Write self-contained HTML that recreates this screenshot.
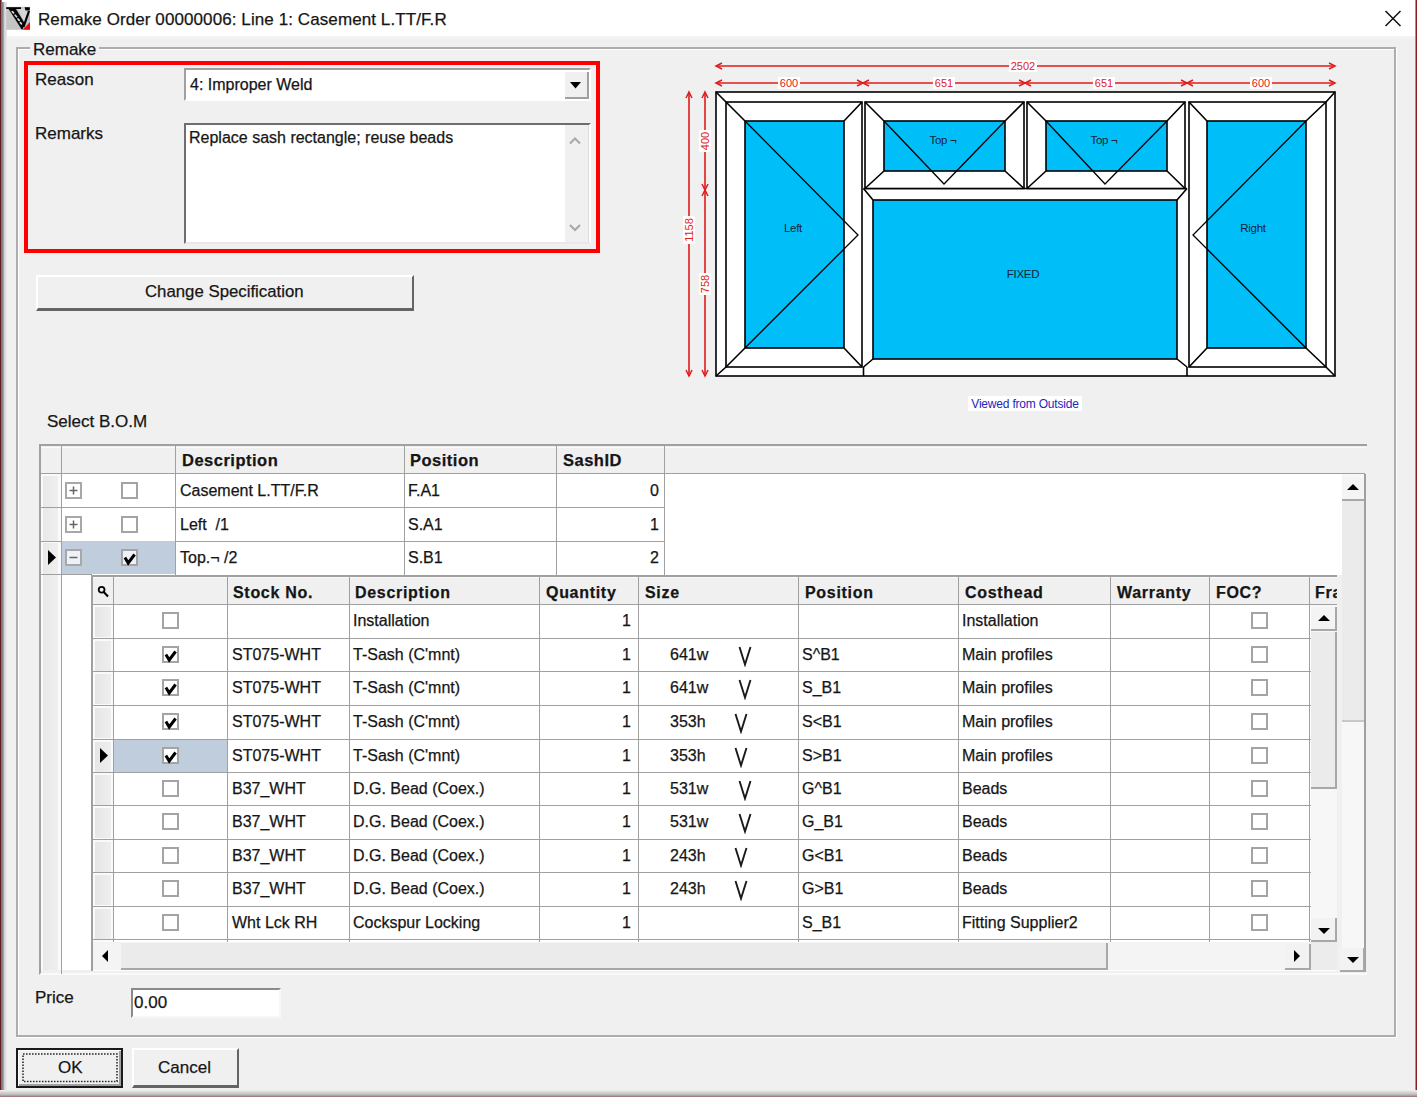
<!DOCTYPE html>
<html><head><meta charset="utf-8">
<style>
*{margin:0;padding:0;box-sizing:border-box}
html,body{width:1417px;height:1097px;overflow:hidden;background:#f0f0f0;font-family:"Liberation Sans",sans-serif;color:#151515}
.a{position:absolute}
.t{position:absolute;white-space:pre;line-height:1;-webkit-text-stroke:0.25px #1a1a1a}
.b{font-weight:bold}
.cb{position:absolute;width:17px;height:17px;border:2px solid #a4a4a4;background:#fff}
</style></head><body>
<div class="a" style="left:0px;top:0px;width:1417px;height:36px;background:#fff"></div>
<div class="a" style="left:0px;top:36px;width:1417px;height:3px;background:linear-gradient(#f6f6f6,#f0f0f0)"></div>
<div class="a" style="left:0px;top:0px;width:1px;height:1097px;background:#601c20"></div>
<div class="a" style="left:1px;top:0px;width:1px;height:1097px;background:#a86468"></div>
<div class="a" style="left:1416px;top:0px;width:1px;height:1097px;background:#8a1c24"></div>
<div class="a" style="left:1415px;top:0px;width:1px;height:1097px;background:#c4848a"></div>
<div class="a" style="left:2px;top:2px;width:5px;height:1090px;background:linear-gradient(90deg,#78787a,#b4b4b8 40%,#d0d4d8 50%,#ececec)"></div>
<svg class="a" style="left:6px;top:6px" width="25" height="25" viewBox="6 6 25 25">
<rect x="6.2" y="6.8" width="23.8" height="23" fill="#c4c4c4"/>
<polygon points="18,8.5 30,8.5 30,12 24.5,22" fill="#d6d6d6"/>
<polygon points="6.2,7.2 21,7.2 21,9 6.2,9" fill="#000"/>
<polygon points="8,8 15.5,8.3 24.5,23 22.8,29.3 21.5,29.2" fill="#050505"/>
<polygon points="24.6,7.2 29.8,7.2 29.8,10.5 25.5,10.5" fill="#000"/>
<path d="M29 11 L23.5 27" stroke="#000" stroke-width="2.2"/>
<path d="M12.3 11.6 L13.6 13 M15.2 15.2 L16.6 16.8 M18 19 L19.2 20.4 M20.4 22.6 L21.4 23.8" stroke="#d8dde4" stroke-width="1.7" stroke-linecap="round"/>
<polygon points="22.8,29.8 30,22 30,29.8" fill="#e01010"/>
</svg>
<div class="t" style="left:38px;top:10.5px;font-size:17px;letter-spacing:0.09px">Remake Order 00000006: Line 1: Casement L.TT/F.R</div>
<svg class="a" style="left:1384px;top:10px" width="18" height="17"><path d="M1.5 1 L16.5 16 M16.5 1 L1.5 16" stroke="#111" stroke-width="1.5"/></svg>
<div class="a" style="left:16px;top:47px;width:1380px;height:990px;border:2px solid #adadad;box-shadow:inset 1px 1px 0 #fff,1px 1px 0 #fff"></div>
<div class="t" style="left:30px;top:41px;font-size:17px;padding:0 3px;background:#f0f0f0">Remake</div>
<div class="a" style="left:24px;top:61px;width:576px;height:192px;border:4px solid #ff0000"></div>
<div class="t" style="left:35px;top:71px;font-size:17px;">Reason</div>
<div class="t" style="left:35px;top:125px;font-size:17px;">Remarks</div>
<div class="a" style="left:184px;top:68px;width:407px;height:33px;background:#fff;border:2px solid #a0a0a0;border-right-color:#fff;border-bottom-color:#fff"></div>
<div class="t" style="left:190px;top:77px;font-size:16px;">4: Improper Weld</div>
<div class="a" style="left:565px;top:72px;width:24px;height:27px;background:#f0f0f0;border-right:2px solid #a0a0a0;border-bottom:2px solid #a0a0a0"></div>
<svg class="a" style="left:569px;top:81px" width="14" height="9"><path d="M1 1 L12 1 L6.5 7.5 Z" fill="#000"/></svg>
<div class="a" style="left:184px;top:123px;width:407px;height:121px;background:#fff;border:2px solid #6e6e6e;border-right-color:#fff;border-bottom-color:#e8e8e8"></div>
<div class="t" style="left:189px;top:130px;font-size:16px;">Replace sash rectangle; reuse beads</div>
<div class="a" style="left:565px;top:125px;width:24px;height:117px;background:#f0f0f0;border-right:1px solid #dcdcdc"></div>
<svg class="a" style="left:567px;top:132px" width="16" height="104"><path d="M3 11.5 L8 6.5 L13 11.5" stroke="#a8a8a8" stroke-width="2" fill="none"/><path d="M3 93 L8 98 L13 93" stroke="#a8a8a8" stroke-width="2" fill="none"/></svg>
<div class="a" style="left:36px;top:275px;width:378px;height:36px;background:#f0f0f0;border-top:2px solid #fff;border-left:2px solid #fff;border-right:2px solid #646464;border-bottom:3px solid #646464"></div>
<div class="t" style="left:145px;top:284px;font-size:16.8px;">Change Specification</div>
<svg class="a" style="left:660px;top:50px" width="700" height="370" viewBox="660 50 700 370"><g fill="none" stroke="#e01c1c" stroke-width="1.6"><path d="M716 66 L1335 66 M716 83 L1335 83"/><path d="M689 92 L689 376 M705 92 L705 376"/></g><g fill="none" stroke="#e01c1c" stroke-width="1.5"><path d="M722 63 L716 66 L722 69"/><path d="M1329 63 L1335 66 L1329 69"/><path d="M722 80 L716 83 L722 86"/><path d="M857 80 L863 83 L857 86"/><path d="M869 80 L863 83 L869 86"/><path d="M1019 80 L1025 83 L1019 86"/><path d="M1031 80 L1025 83 L1031 86"/><path d="M1181 80 L1187 83 L1181 86"/><path d="M1193 80 L1187 83 L1193 86"/><path d="M1329 80 L1335 83 L1329 86"/><path d="M686 98 L689 92 L692 98"/><path d="M686 370 L689 376 L692 370"/><path d="M702 98 L705 92 L708 98"/><path d="M702 184 L705 190 L708 184"/><path d="M702 196 L705 190 L708 196"/><path d="M702 370 L705 376 L708 370"/></g><g font-family="Liberation Sans" font-size="11" fill="#e01c1c" text-anchor="middle"><rect x="1009.0" y="60" width="28" height="12" fill="#fff"/><text x="1023" y="70">2502</text><rect x="778.0" y="77" width="22" height="12" fill="#fff"/><text x="789" y="87">600</text><rect x="933.0" y="77" width="22" height="12" fill="#fff"/><text x="944" y="87">651</text><rect x="1093.0" y="77" width="22" height="12" fill="#fff"/><text x="1104" y="87">651</text><rect x="1250.0" y="77" width="22" height="12" fill="#fff"/><text x="1261" y="87">600</text><g transform="translate(689 230) rotate(-90)"><rect x="-14.0" y="-6" width="28" height="12" fill="#fff"/><text x="0" y="4">1158</text></g><g transform="translate(705 141) rotate(-90)"><rect x="-11.0" y="-6" width="22" height="12" fill="#fff"/><text x="0" y="4">400</text></g><g transform="translate(705 284) rotate(-90)"><rect x="-11.0" y="-6" width="22" height="12" fill="#fff"/><text x="0" y="4">758</text></g></g><g stroke="#000" stroke-width="1.6" fill="#fff"><rect x="716" y="92" width="619" height="284"/><path d="M716 92 L726 102 M1335 92 L1326 102 M716 376 L726 367 M1335 376 L1326 367" fill="none"/><path d="M863.5 188.5 L1187 188.5 M863.5 367 L863.5 376 M1187 367 L1187 376" fill="none"/><rect x="873" y="200" width="304" height="159" fill="#00bef8"/><path d="M863.5 188.5 L873 200 M1187 188.5 L1177 200 M863.5 367 L873 359 M1187 367 L1177 359" fill="none"/><rect x="726" y="102" width="136" height="265" fill="#fff"/><rect x="745" y="121" width="99" height="227" fill="#00bef8"/><path d="M726 102 L745 121 M862 102 L844 121 M726 367 L745 348 M862 367 L844 348" fill="none"/><rect x="865" y="102" width="159" height="86.5" fill="#fff"/><rect x="884" y="121" width="121" height="50" fill="#00bef8"/><path d="M865 102 L884 121 M1024 102 L1005 121 M865 188.5 L884 171 M1024 188.5 L1005 171" fill="none"/><rect x="1027" y="102" width="158" height="86.5" fill="#fff"/><rect x="1046" y="121" width="121" height="50" fill="#00bef8"/><path d="M1027 102 L1046 121 M1185 102 L1167 121 M1027 188.5 L1046 171 M1185 188.5 L1167 171" fill="none"/><rect x="1189" y="102" width="137" height="265" fill="#fff"/><rect x="1207" y="121" width="99" height="227" fill="#00bef8"/><path d="M1189 102 L1207 121 M1326 102 L1306 121 M1189 367 L1207 348 M1326 367 L1306 348" fill="none"/></g><g stroke="#000" stroke-width="1.3" fill="none"><path d="M745 121 L858 235 L745 348"/><path d="M1306 121 L1193 235 L1306 348"/><path d="M884 121 L944 184 L1005 121"/><path d="M1046 121 L1105 184 L1167 121"/></g><g font-family="Liberation Sans" font-size="11.5" fill="#15253a" text-anchor="middle" letter-spacing="-0.3"><text x="793" y="232">Left</text><text x="1253" y="232">Right</text><text x="943" y="144">Top ¬</text><text x="1104" y="144">Top ¬</text><text x="1023" y="278">FIXED</text></g><rect x="968" y="396" width="114" height="15" fill="#fff"/><text x="1025" y="408" font-family="Liberation Sans" font-size="12" fill="#2424c0" text-anchor="middle" letter-spacing="-0.2">Viewed from Outside</text></svg>
<div class="t" style="left:47px;top:413px;font-size:17px;">Select B.O.M</div>
<div class="a" style="left:39px;top:444px;width:1328px;height:531px;background:#f0f0f0;border:2px solid #a0a0a0;border-right:none;border-bottom:2px solid #fafafa"></div>
<div class="a" style="left:1364px;top:474px;width:2px;height:498px;background:#a0a0a0"></div>
<div class="a" style="left:41px;top:447px;width:1325px;height:26px;background:#f0f0f0;box-shadow:inset 0 1px 0 #fafafa"></div>
<div class="a" style="left:41px;top:473px;width:1324px;height:1px;background:#a0a0a0"></div>
<div class="a" style="left:41px;top:474px;width:20px;height:496px;background:#fafafa"></div>
<div class="a" style="left:43px;top:476px;width:15px;height:33px;background:linear-gradient(90deg,#e8e8e8,#efefef)"></div>
<div class="a" style="left:43px;top:509px;width:15px;height:33px;background:linear-gradient(90deg,#e8e8e8,#efefef)"></div>
<div class="a" style="left:43px;top:543px;width:15px;height:33px;background:linear-gradient(90deg,#e8e8e8,#efefef)"></div>
<div class="a" style="left:43px;top:576px;width:15px;height:394px;background:linear-gradient(90deg,#e8e8e8,#efefef)"></div>
<div class="a" style="left:61px;top:446px;width:1px;height:528px;background:#a0a0a0"></div>
<div class="a" style="left:62px;top:474px;width:1280px;height:101px;background:#fff"></div>
<div class="a" style="left:175px;top:446px;width:1px;height:129px;background:#a0a0a0"></div>
<div class="a" style="left:404px;top:446px;width:1px;height:129px;background:#a0a0a0"></div>
<div class="a" style="left:556px;top:446px;width:1px;height:129px;background:#a0a0a0"></div>
<div class="a" style="left:664px;top:446px;width:1px;height:129px;background:#a0a0a0"></div>
<div class="a" style="left:41px;top:507px;width:623px;height:1px;background:#a0a0a0"></div>
<div class="a" style="left:41px;top:541px;width:623px;height:1px;background:#a0a0a0"></div>
<div class="a" style="left:41px;top:574px;width:51px;height:1px;background:#a0a0a0"></div>
<div class="a" style="left:62px;top:575px;width:30px;height:395px;background:#fff"></div>
<div class="a" style="left:41px;top:574px;width:20px;height:1px;background:#a0a0a0"></div>
<div class="t" style="left:182px;top:452.3px;font-size:16.5px;font-weight:bold;letter-spacing:0.5px">Description</div>
<div class="t" style="left:410px;top:452.3px;font-size:16.5px;font-weight:bold;letter-spacing:0.5px">Position</div>
<div class="t" style="left:563px;top:452.3px;font-size:16.5px;font-weight:bold;letter-spacing:0.5px">SashID</div>
<div class="a" style="left:65px;top:482.0px;width:17px;height:17px;border:2px solid #a8a8a8;background:#fff"></div>
<svg class="a" style="left:65px;top:482.0px" width="17" height="17"><path d="M4.5 8.5 L12.5 8.5 M8.5 4.5 L8.5 12.5" stroke="#666" stroke-width="1.5"/></svg>
<div class="cb" style="left:121px;top:482.0px;"></div>
<div class="t" style="left:180px;top:483.0px;font-size:16px;">Casement L.TT/F.R</div>
<div class="t" style="left:408px;top:483.0px;font-size:16px;">F.A1</div>
<div class="t" style="left:556px;top:483.0px;font-size:16px;width:103px;text-align:right">0</div>
<div class="a" style="left:65px;top:515.5px;width:17px;height:17px;border:2px solid #a8a8a8;background:#fff"></div>
<svg class="a" style="left:65px;top:515.5px" width="17" height="17"><path d="M4.5 8.5 L12.5 8.5 M8.5 4.5 L8.5 12.5" stroke="#666" stroke-width="1.5"/></svg>
<div class="cb" style="left:121px;top:515.5px;"></div>
<div class="t" style="left:180px;top:516.5px;font-size:16px;">Left  /1</div>
<div class="t" style="left:408px;top:516.5px;font-size:16px;">S.A1</div>
<div class="t" style="left:556px;top:516.5px;font-size:16px;width:103px;text-align:right">1</div>
<div class="a" style="left:62px;top:541px;width:113px;height:33px;background:#bfcddc"></div>
<svg class="a" style="left:47px;top:550px" width="10" height="15"><path d="M1 0 L9 7.5 L1 15 Z" fill="#000"/></svg>
<div class="a" style="left:65px;top:549.0px;width:17px;height:17px;border:2px solid #a8a8a8;background:#eef2f6"></div>
<svg class="a" style="left:65px;top:549.0px" width="17" height="17"><path d="M4.5 8.5 L12.5 8.5" stroke="#666" stroke-width="1.5"/></svg>
<div class="cb" style="left:121px;top:549.0px;background:#eef2f6"></div>
<svg class="a" style="left:121px;top:549.0px" width="17" height="17"><path d="M3.9 8.5 L7.2 14 L13.6 5.5" stroke="#000" stroke-width="3" fill="none"/></svg>
<div class="t" style="left:180px;top:550.0px;font-size:16px;">Top.¬ /2</div>
<div class="t" style="left:408px;top:550.0px;font-size:16px;">S.B1</div>
<div class="t" style="left:556px;top:550.0px;font-size:16px;width:103px;text-align:right">2</div>
<div class="a" style="left:1342px;top:474px;width:22px;height:498px;background:#f7f7f7"></div>
<div class="a" style="left:1342px;top:477px;width:22px;height:24px;background:#f4f4f4;border-bottom:2px solid #a8a8a8"></div>
<svg class="a" style="left:1346px;top:483px" width="14" height="8"><path d="M1 7 L7 1 L13 7 Z" fill="#000"/></svg>
<div class="a" style="left:1342px;top:501px;width:22px;height:221px;background:#ebebeb;border-bottom:2px solid #c8c8c8"></div>
<div class="a" style="left:1340px;top:948px;width:25px;height:24px;background:#f2f2f2;border-right:2px solid #a8a8a8;border-bottom:2px solid #a8a8a8"></div>
<svg class="a" style="left:1346px;top:956px" width="14" height="8"><path d="M1 1 L13 1 L7 7 Z" fill="#000"/></svg>
<div class="a" style="left:91px;top:575px;width:1246px;height:396px;border:2px solid #a0a0a0;border-right:none;border-bottom:none;background:#fff"></div>
<div class="a" style="left:93px;top:577px;width:1244px;height:27px;background:#f0f0f0;box-shadow:inset 0 1px 0 #fafafa"></div>
<div class="a" style="left:93px;top:604px;width:1244px;height:1px;background:#a0a0a0"></div>
<div class="a" style="left:93px;top:605px;width:20px;height:337px;background:#fafafa"></div>
<div class="a" style="left:95px;top:607px;width:16px;height:30px;background:linear-gradient(90deg,#e6e6e6,#eeeeee)"></div>
<div class="a" style="left:95px;top:641px;width:16px;height:30px;background:linear-gradient(90deg,#e6e6e6,#eeeeee)"></div>
<div class="a" style="left:95px;top:674px;width:16px;height:30px;background:linear-gradient(90deg,#e6e6e6,#eeeeee)"></div>
<div class="a" style="left:95px;top:708px;width:16px;height:30px;background:linear-gradient(90deg,#e6e6e6,#eeeeee)"></div>
<div class="a" style="left:95px;top:742px;width:16px;height:30px;background:linear-gradient(90deg,#e6e6e6,#eeeeee)"></div>
<div class="a" style="left:95px;top:775px;width:16px;height:30px;background:linear-gradient(90deg,#e6e6e6,#eeeeee)"></div>
<div class="a" style="left:95px;top:808px;width:16px;height:30px;background:linear-gradient(90deg,#e6e6e6,#eeeeee)"></div>
<div class="a" style="left:95px;top:842px;width:16px;height:30px;background:linear-gradient(90deg,#e6e6e6,#eeeeee)"></div>
<div class="a" style="left:95px;top:875px;width:16px;height:30px;background:linear-gradient(90deg,#e6e6e6,#eeeeee)"></div>
<div class="a" style="left:95px;top:909px;width:16px;height:30px;background:linear-gradient(90deg,#e6e6e6,#eeeeee)"></div>
<div class="a" style="left:95px;top:942px;width:16px;height:-1px;background:linear-gradient(90deg,#e6e6e6,#eeeeee)"></div>
<div class="a" style="left:113px;top:577px;width:1px;height:365px;background:#a0a0a0"></div>
<div class="a" style="left:227px;top:577px;width:1px;height:365px;background:#a0a0a0"></div>
<div class="a" style="left:349px;top:577px;width:1px;height:365px;background:#a0a0a0"></div>
<div class="a" style="left:539px;top:577px;width:1px;height:365px;background:#a0a0a0"></div>
<div class="a" style="left:638px;top:577px;width:1px;height:365px;background:#a0a0a0"></div>
<div class="a" style="left:798px;top:577px;width:1px;height:365px;background:#a0a0a0"></div>
<div class="a" style="left:958px;top:577px;width:1px;height:365px;background:#a0a0a0"></div>
<div class="a" style="left:1110px;top:577px;width:1px;height:365px;background:#a0a0a0"></div>
<div class="a" style="left:1209px;top:577px;width:1px;height:365px;background:#a0a0a0"></div>
<div class="a" style="left:1309px;top:577px;width:1px;height:365px;background:#a0a0a0"></div>
<div class="a" style="left:93px;top:638px;width:1218px;height:1px;background:#a0a0a0"></div>
<div class="a" style="left:93px;top:671px;width:1218px;height:1px;background:#a0a0a0"></div>
<div class="a" style="left:93px;top:705px;width:1218px;height:1px;background:#a0a0a0"></div>
<div class="a" style="left:93px;top:739px;width:1218px;height:1px;background:#a0a0a0"></div>
<div class="a" style="left:93px;top:772px;width:1218px;height:1px;background:#a0a0a0"></div>
<div class="a" style="left:93px;top:805px;width:1218px;height:1px;background:#a0a0a0"></div>
<div class="a" style="left:93px;top:839px;width:1218px;height:1px;background:#a0a0a0"></div>
<div class="a" style="left:93px;top:872px;width:1218px;height:1px;background:#a0a0a0"></div>
<div class="a" style="left:93px;top:906px;width:1218px;height:1px;background:#a0a0a0"></div>
<div class="a" style="left:93px;top:939px;width:1218px;height:1px;background:#a0a0a0"></div>
<svg class="a" style="left:97px;top:585px" width="14" height="14"><circle cx="4.6" cy="4.8" r="2.9" stroke="#000" stroke-width="1.8" fill="none"/><path d="M7 7.2 L11 11.5" stroke="#000" stroke-width="2"/></svg>
<div class="t" style="left:233px;top:585px;font-size:16px;font-weight:bold;letter-spacing:0.7px">Stock No.</div>
<div class="t" style="left:355px;top:585px;font-size:16px;font-weight:bold;letter-spacing:0.7px">Description</div>
<div class="t" style="left:546px;top:585px;font-size:16px;font-weight:bold;letter-spacing:0.7px">Quantity</div>
<div class="t" style="left:645px;top:585px;font-size:16px;font-weight:bold;letter-spacing:0.7px">Size</div>
<div class="t" style="left:805px;top:585px;font-size:16px;font-weight:bold;letter-spacing:0.7px">Position</div>
<div class="t" style="left:965px;top:585px;font-size:16px;font-weight:bold;letter-spacing:0.7px">Costhead</div>
<div class="t" style="left:1117px;top:585px;font-size:16px;font-weight:bold;letter-spacing:0.7px">Warranty</div>
<div class="t" style="left:1216px;top:585px;font-size:16px;font-weight:bold;letter-spacing:0.7px">FOC?</div>
<div class="t" style="left:1315px;top:585px;font-size:16px;font-weight:bold;letter-spacing:0.7px;width:22px;overflow:hidden">Fra</div>
<div class="cb" style="left:162px;top:612px"></div>
<div class="t" style="left:232px;top:613px;font-size:16px;"></div>
<div class="t" style="left:353px;top:613px;font-size:16px;">Installation</div>
<div class="t" style="left:539px;top:613px;font-size:16px;width:92px;text-align:right">1</div>
<div class="t" style="left:670px;top:613px;font-size:16px;"></div>
<div class="t" style="left:802px;top:613px;font-size:16px;"></div>
<div class="t" style="left:962px;top:613px;font-size:16px;">Installation</div>
<div class="cb" style="left:1251px;top:612px"></div>
<div class="cb" style="left:162px;top:646px"></div>
<svg class="a" style="left:162px;top:646px" width="17" height="17"><path d="M3.9 8.5 L7.2 14 L13.6 5.5" stroke="#000" stroke-width="3" fill="none" stroke-linejoin="miter"/></svg>
<div class="t" style="left:232px;top:647px;font-size:16px;">ST075-WHT</div>
<div class="t" style="left:353px;top:647px;font-size:16px;">T-Sash (C'mnt)</div>
<div class="t" style="left:539px;top:647px;font-size:16px;width:92px;text-align:right">1</div>
<div class="t" style="left:670px;top:647px;font-size:16px;">641w</div>
<svg class="a" style="left:737px;top:644.5px" width="16" height="22"><path d="M2.5 2 L8 19.5 L13.5 2" stroke="#1a1a1a" stroke-width="1.9" fill="none"/></svg>
<div class="t" style="left:802px;top:647px;font-size:16px;">S^B1</div>
<div class="t" style="left:962px;top:647px;font-size:16px;">Main profiles</div>
<div class="cb" style="left:1251px;top:646px"></div>
<div class="cb" style="left:162px;top:679px"></div>
<svg class="a" style="left:162px;top:679px" width="17" height="17"><path d="M3.9 8.5 L7.2 14 L13.6 5.5" stroke="#000" stroke-width="3" fill="none" stroke-linejoin="miter"/></svg>
<div class="t" style="left:232px;top:680px;font-size:16px;">ST075-WHT</div>
<div class="t" style="left:353px;top:680px;font-size:16px;">T-Sash (C'mnt)</div>
<div class="t" style="left:539px;top:680px;font-size:16px;width:92px;text-align:right">1</div>
<div class="t" style="left:670px;top:680px;font-size:16px;">641w</div>
<svg class="a" style="left:737px;top:677.5px" width="16" height="22"><path d="M2.5 2 L8 19.5 L13.5 2" stroke="#1a1a1a" stroke-width="1.9" fill="none"/></svg>
<div class="t" style="left:802px;top:680px;font-size:16px;">S_B1</div>
<div class="t" style="left:962px;top:680px;font-size:16px;">Main profiles</div>
<div class="cb" style="left:1251px;top:679px"></div>
<div class="cb" style="left:162px;top:713px"></div>
<svg class="a" style="left:162px;top:713px" width="17" height="17"><path d="M3.9 8.5 L7.2 14 L13.6 5.5" stroke="#000" stroke-width="3" fill="none" stroke-linejoin="miter"/></svg>
<div class="t" style="left:232px;top:714px;font-size:16px;">ST075-WHT</div>
<div class="t" style="left:353px;top:714px;font-size:16px;">T-Sash (C'mnt)</div>
<div class="t" style="left:539px;top:714px;font-size:16px;width:92px;text-align:right">1</div>
<div class="t" style="left:670px;top:714px;font-size:16px;">353h</div>
<svg class="a" style="left:733px;top:711.5px" width="16" height="22"><path d="M2.5 2 L8 19.5 L13.5 2" stroke="#1a1a1a" stroke-width="1.9" fill="none"/></svg>
<div class="t" style="left:802px;top:714px;font-size:16px;">S&lt;B1</div>
<div class="t" style="left:962px;top:714px;font-size:16px;">Main profiles</div>
<div class="cb" style="left:1251px;top:713px"></div>
<div class="a" style="left:114px;top:740px;width:113px;height:32px;background:#bfcddc"></div>
<svg class="a" style="left:99px;top:748px" width="10" height="15"><path d="M1 0 L9 7.5 L1 15 Z" fill="#000"/></svg>
<div class="cb" style="left:162px;top:747px"></div>
<svg class="a" style="left:162px;top:747px" width="17" height="17"><path d="M3.9 8.5 L7.2 14 L13.6 5.5" stroke="#000" stroke-width="3" fill="none" stroke-linejoin="miter"/></svg>
<div class="t" style="left:232px;top:748px;font-size:16px;">ST075-WHT</div>
<div class="t" style="left:353px;top:748px;font-size:16px;">T-Sash (C'mnt)</div>
<div class="t" style="left:539px;top:748px;font-size:16px;width:92px;text-align:right">1</div>
<div class="t" style="left:670px;top:748px;font-size:16px;">353h</div>
<svg class="a" style="left:733px;top:745.5px" width="16" height="22"><path d="M2.5 2 L8 19.5 L13.5 2" stroke="#1a1a1a" stroke-width="1.9" fill="none"/></svg>
<div class="t" style="left:802px;top:748px;font-size:16px;">S&gt;B1</div>
<div class="t" style="left:962px;top:748px;font-size:16px;">Main profiles</div>
<div class="cb" style="left:1251px;top:747px"></div>
<div class="cb" style="left:162px;top:780px"></div>
<div class="t" style="left:232px;top:781px;font-size:16px;">B37_WHT</div>
<div class="t" style="left:353px;top:781px;font-size:16px;">D.G. Bead (Coex.)</div>
<div class="t" style="left:539px;top:781px;font-size:16px;width:92px;text-align:right">1</div>
<div class="t" style="left:670px;top:781px;font-size:16px;">531w</div>
<svg class="a" style="left:737px;top:778.5px" width="16" height="22"><path d="M2.5 2 L8 19.5 L13.5 2" stroke="#1a1a1a" stroke-width="1.9" fill="none"/></svg>
<div class="t" style="left:802px;top:781px;font-size:16px;">G^B1</div>
<div class="t" style="left:962px;top:781px;font-size:16px;">Beads</div>
<div class="cb" style="left:1251px;top:780px"></div>
<div class="cb" style="left:162px;top:813px"></div>
<div class="t" style="left:232px;top:814px;font-size:16px;">B37_WHT</div>
<div class="t" style="left:353px;top:814px;font-size:16px;">D.G. Bead (Coex.)</div>
<div class="t" style="left:539px;top:814px;font-size:16px;width:92px;text-align:right">1</div>
<div class="t" style="left:670px;top:814px;font-size:16px;">531w</div>
<svg class="a" style="left:737px;top:811.5px" width="16" height="22"><path d="M2.5 2 L8 19.5 L13.5 2" stroke="#1a1a1a" stroke-width="1.9" fill="none"/></svg>
<div class="t" style="left:802px;top:814px;font-size:16px;">G_B1</div>
<div class="t" style="left:962px;top:814px;font-size:16px;">Beads</div>
<div class="cb" style="left:1251px;top:813px"></div>
<div class="cb" style="left:162px;top:847px"></div>
<div class="t" style="left:232px;top:848px;font-size:16px;">B37_WHT</div>
<div class="t" style="left:353px;top:848px;font-size:16px;">D.G. Bead (Coex.)</div>
<div class="t" style="left:539px;top:848px;font-size:16px;width:92px;text-align:right">1</div>
<div class="t" style="left:670px;top:848px;font-size:16px;">243h</div>
<svg class="a" style="left:733px;top:845.5px" width="16" height="22"><path d="M2.5 2 L8 19.5 L13.5 2" stroke="#1a1a1a" stroke-width="1.9" fill="none"/></svg>
<div class="t" style="left:802px;top:848px;font-size:16px;">G&lt;B1</div>
<div class="t" style="left:962px;top:848px;font-size:16px;">Beads</div>
<div class="cb" style="left:1251px;top:847px"></div>
<div class="cb" style="left:162px;top:880px"></div>
<div class="t" style="left:232px;top:881px;font-size:16px;">B37_WHT</div>
<div class="t" style="left:353px;top:881px;font-size:16px;">D.G. Bead (Coex.)</div>
<div class="t" style="left:539px;top:881px;font-size:16px;width:92px;text-align:right">1</div>
<div class="t" style="left:670px;top:881px;font-size:16px;">243h</div>
<svg class="a" style="left:733px;top:878.5px" width="16" height="22"><path d="M2.5 2 L8 19.5 L13.5 2" stroke="#1a1a1a" stroke-width="1.9" fill="none"/></svg>
<div class="t" style="left:802px;top:881px;font-size:16px;">G&gt;B1</div>
<div class="t" style="left:962px;top:881px;font-size:16px;">Beads</div>
<div class="cb" style="left:1251px;top:880px"></div>
<div class="cb" style="left:162px;top:914px"></div>
<div class="t" style="left:232px;top:915px;font-size:16px;">Wht Lck RH</div>
<div class="t" style="left:353px;top:915px;font-size:16px;">Cockspur Locking</div>
<div class="t" style="left:539px;top:915px;font-size:16px;width:92px;text-align:right">1</div>
<div class="t" style="left:670px;top:915px;font-size:16px;"></div>
<div class="t" style="left:802px;top:915px;font-size:16px;">S_B1</div>
<div class="t" style="left:962px;top:915px;font-size:16px;">Fitting Supplier2</div>
<div class="cb" style="left:1251px;top:914px"></div>
<div class="a" style="left:1311px;top:605px;width:26px;height:337px;background:#f7f7f7"></div>
<div class="a" style="left:1311px;top:607px;width:26px;height:24px;background:#f4f4f4;border-right:2px solid #a8a8a8;border-bottom:2px solid #a8a8a8"></div>
<svg class="a" style="left:1317px;top:614px" width="14" height="8"><path d="M1 7 L7 1 L13 7 Z" fill="#000"/></svg>
<div class="a" style="left:1311px;top:632px;width:26px;height:157px;background:#ebebeb;border-right:2px solid #a8a8a8;border-bottom:2px solid #a8a8a8"></div>
<div class="a" style="left:1311px;top:918px;width:26px;height:24px;background:#f2f2f2;border-right:2px solid #a8a8a8;border-bottom:2px solid #a8a8a8"></div>
<svg class="a" style="left:1317px;top:927px" width="14" height="8"><path d="M1 1 L13 1 L7 7 Z" fill="#000"/></svg>
<div class="a" style="left:93px;top:942px;width:1218px;height:28px;background:#f4f4f4"></div>
<div class="a" style="left:93px;top:944px;width:28px;height:26px;background:#f4f4f4"></div>
<svg class="a" style="left:101px;top:949px" width="8" height="14"><path d="M7 1 L1 7 L7 13 Z" fill="#000"/></svg>
<div class="a" style="left:121px;top:943px;width:987px;height:27px;background:#ebebeb;border-right:2px solid #a8a8a8;border-bottom:2px solid #a8a8a8"></div>
<div class="a" style="left:1285px;top:944px;width:26px;height:26px;background:#f2f2f2;border-right:2px solid #a8a8a8;border-bottom:2px solid #a8a8a8"></div>
<svg class="a" style="left:1293px;top:949px" width="8" height="14"><path d="M1 1 L7 7 L1 13 Z" fill="#000"/></svg>
<div class="a" style="left:1311px;top:942px;width:26px;height:28px;background:#ececec"></div>
<div class="t" style="left:35px;top:989px;font-size:17px;">Price</div>
<div class="a" style="left:131px;top:988px;width:150px;height:30px;background:#fff;border:2px solid #8a8a8a;border-right-color:#f8f8f8;border-bottom-color:#f8f8f8"></div>
<div class="t" style="left:134px;top:994px;font-size:17px;">0.00</div>
<div class="a" style="left:16px;top:1048px;width:107px;height:40px;border:2px solid #1a1a1a;background:#f0f0f0;box-shadow:inset 1px 1px 0 #fff,inset -2px -2px 0 #a0a0a0"></div>
<svg class="a" style="left:22px;top:1053px" width="96" height="30"><rect x="1" y="1" width="94" height="27.5" fill="none" stroke="#2a2a2a" stroke-width="1.6" stroke-dasharray="1.6 1.4"/></svg>
<div class="t" style="left:58px;top:1059px;font-size:17px;">OK</div>
<div class="a" style="left:132px;top:1048px;width:107px;height:40px;background:#f0f0f0;border-top:2px solid #fff;border-left:2px solid #fff;border-right:2px solid #646464;border-bottom:3px solid #646464"></div>
<div class="t" style="left:158px;top:1059px;font-size:17px;">Cancel</div>
<div class="a" style="left:0px;top:1090px;width:1417px;height:7px;background:linear-gradient(#f0f0f0,#b8b8b8 70%,#9a6a70)"></div>
</body></html>
